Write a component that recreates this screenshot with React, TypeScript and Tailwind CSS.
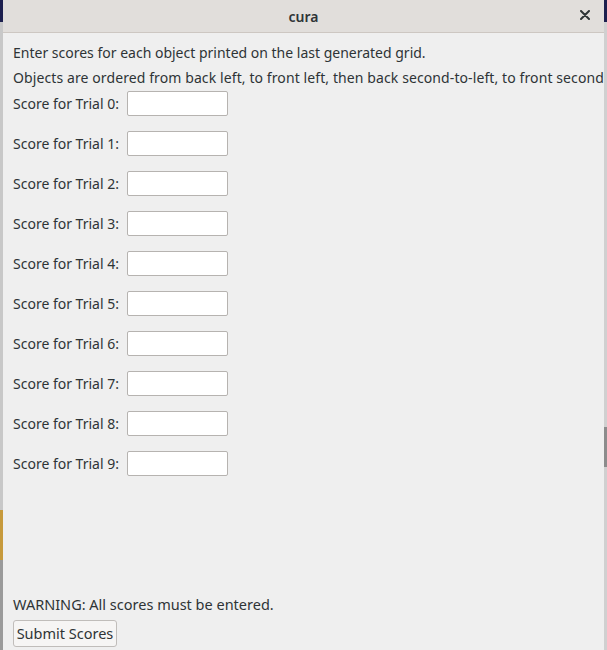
import { useState } from "react";

const TRIALS = Array.from({ length: 10 }, (_, i) => i);

function CloseIcon() {
  return (
    <svg width="10" height="10" viewBox="0 0 10 10" aria-hidden>
      <path d="M1 1 L9 9 M9 1 L1 9" stroke="#2e3436" strokeWidth="2" strokeLinecap="round" />
    </svg>
  );
}

export default function App() {
  const [scores, setScores] = useState<string[]>(TRIALS.map(() => ""));

  return (
    <div
      className="flex h-[650px] w-[607px] overflow-hidden bg-[#d5d5d5] text-[#2e3436]"
      style={{ fontFamily: '"Noto Sans", "Open Sans", sans-serif' }}
    >
      {/* desktop peeking out on the left */}
      <div className="flex w-[3px] shrink-0 flex-col">
        <div className="h-[22px] bg-[#1c1f4e]" />
        <div className="h-[488px] bg-[#c8c8c8]" />
        <div className="h-[50px] bg-[#c79a3c]" />
        <div className="flex-1 bg-[#9a9a9a]" />
      </div>

      <div className="flex min-w-0 flex-1 flex-col bg-[#efefef]">
        <div className="relative flex h-[33px] shrink-0 items-center justify-center border-b border-[#cdc7c2] bg-[#e1dedb]">
          <span className="text-[14px] font-semibold text-[#2e3436]">cura</span>
          <button className="absolute right-[14px] top-[10px] flex h-[10px] w-[10px] items-center justify-center">
            <CloseIcon />
          </button>
        </div>

        <div className="flex flex-1 flex-col overflow-hidden pl-[10px] pt-[7px] pb-[3px]">
          <p className="flex h-[25px] items-center whitespace-nowrap text-[14px]">
            Enter scores for each object printed on the last generated grid.
          </p>
          <p className="flex h-[25px] items-center whitespace-nowrap text-[14px] tracking-[0.1px]">
            Objects are ordered from back left, to front left, then back second-to-left, to front second
          </p>
          <div className="flex flex-col gap-[15px] pt-[1px]">
            {TRIALS.map((i) => (
              <label key={i} className="flex h-[25px] items-center gap-[8px] text-[14px]">
                <span className="whitespace-nowrap">Score for Trial {i}:</span>
                <input
                  className="h-[25px] w-[101px] rounded-[2px] border border-[#b6b3b0] bg-white px-1 text-[14px] outline-none"
                  value={scores[i]}
                  onChange={(e) =>
                    setScores((s) => s.map((v, j) => (j === i ? e.target.value : v)))
                  }
                />
              </label>
            ))}
          </div>

          <div className="mt-auto flex flex-col gap-[4px]">
            <p className="text-[14.5px]">WARNING: All scores must be entered.</p>
            <button className="h-[27px] w-[104px] rounded-[3px] border border-[#c0bdba] bg-[#f6f5f4] text-[14.5px] text-[#2e3436]">
              Submit Scores
            </button>
          </div>
        </div>
      </div>

      {/* desktop peeking out on the right */}
      <div className="flex w-[3px] shrink-0 flex-col">
        <div className="h-[22px] bg-[#1c1f4e]" />
        <div className="h-[405px] bg-[#d0d0d0]" />
        <div className="h-[40px] bg-[#8c8c8c]" />
        <div className="flex-1 bg-[#d0d0d0]" />
      </div>
    </div>
  );
}
